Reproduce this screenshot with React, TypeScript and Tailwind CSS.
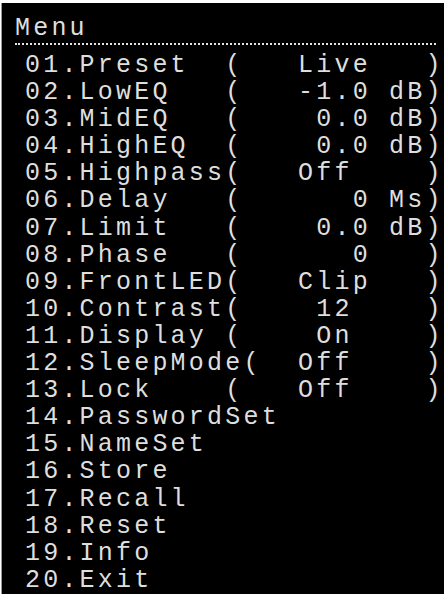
import React from "react";

const rows: string[] = [
  "01.Preset  (   Live   )",
  "02.LowEQ   (   -1.0 dB)",
  "03.MidEQ   (    0.0 dB)",
  "04.HighEQ  (    0.0 dB)",
  "05.Highpass(   Off    )",
  "06.Delay   (      0 Ms)",
  "07.Limit   (    0.0 dB)",
  "08.Phase   (      0   )",
  "09.FrontLED(   Clip   )",
  "10.Contrast(    12    )",
  "11.Display (    On    )",
  "12.SleepMode(  Off    )",
  "13.Lock    (   Off    )",
  "14.PasswordSet",
  "15.NameSet",
  "16.Store",
  "17.Recall",
  "18.Reset",
  "19.Info",
  "20.Exit",
];

export default function App() {
  return (
    <div className="w-[448px] h-[596px] bg-white pt-[3px] pl-px pr-[4px] pb-[2px]">
      <div className="h-full bg-black border-l border-[#9a9a9a] text-[#dedede] font-['Liberation_Mono',monospace] text-[25px] tracking-[3.2px] leading-[27px] pt-[12px]">
        <div className="pl-[13px] whitespace-pre">Menu</div>
        <div className="ml-[13px] mr-[8px] mt-px border-t-2 border-dotted border-[#e6e6e6]" />
        <div className="pl-[23px] pt-[7px] flex flex-col">
          {rows.map((r) => (
            <div key={r} className="whitespace-pre leading-[27.1px] h-[27.1px]">
              {r}
            </div>
          ))}
        </div>
      </div>
    </div>
  );
}
